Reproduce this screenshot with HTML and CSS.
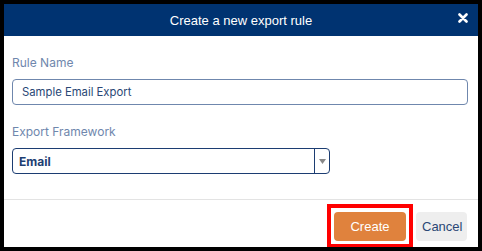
FILE: index.html
```html
<!DOCTYPE html>
<html lang="en">

<head>
    <meta charset="UTF-8">
    <meta name="viewport" content="width=device-width, initial-scale=1.0">
    <title>Create a new export rule</title>
    <link rel="stylesheet" href="styles.css">
</head>

<body>
    <div class="dialog">
        <div class="dialog-header">
            <span class="dialog-title">Create a new export rule</span>
            <button class="close-btn" aria-label="Close">
                <svg width="10" height="10" viewBox="0 0 10 10">
                    <path d="M1.5 1.5 L8.5 8.5 M8.5 1.5 L1.5 8.5" stroke="#fff" stroke-width="2.6" stroke-linecap="round" />
                </svg>
            </button>
        </div>

        <div class="dialog-body">
            <div class="form-group">
                <label for="ruleName">Rule Name</label>
                <input type="text" id="ruleName" value="Sample Email Export">
            </div>

            <div class="form-group">
                <label for="framework">Export Framework</label>
                <div class="select-box" id="framework">
                    <span class="select-value">Email</span>
                    <span class="select-arrow">
                        <svg width="7" height="5" viewBox="0 0 7 5">
                            <path d="M0 0 H7 L3.5 5 Z" fill="#888" />
                        </svg>
                    </span>
                </div>
            </div>
        </div>

        <div class="dialog-footer">
            <span class="highlight">
                <button class="btn btn-create">Create</button>
            </span>
            <button class="btn btn-cancel">Cancel</button>
        </div>
    </div>
</body>

</html>
```

FILE: styles.css
```css
html,
body {
    margin: 0;
    height: 100%;
    background-color: #000;
}

body {
    padding: 4px 4px 0 4px;
    box-sizing: border-box;
    font-family: Inter, "Liberation Sans", Arial, sans-serif;
}

.dialog {
    width: 474px;
    height: 243px;
    background: #fff;
    display: flex;
    flex-direction: column;
    overflow: hidden;
}

.dialog-header {
    height: 32px;
    background-color: #003371;
    display: flex;
    align-items: center;
    justify-content: center;
    position: relative;
}

.dialog-title {
    color: #fff;
    font-family: "Liberation Sans", Arial, sans-serif;
    font-size: 13px;
}

.close-btn {
    position: absolute;
    right: 10px;
    top: 9px;
    background: none;
    border: none;
    padding: 0;
    width: 10px;
    height: 10px;
    display: flex;
}

.dialog-body {
    padding: 19px 10px 0 8px;
    height: 164px;
    box-sizing: border-box;
    border-bottom: 1px solid #e3e3e3;
}

.form-group {
    margin-bottom: 19px;
}

label {
    display: block;
    font-size: 12px;
    line-height: 16px;
    color: #6f87ad;
    margin-bottom: 8px;
}

input[type="text"] {
    width: 100%;
    height: 26px;
    box-sizing: border-box;
    border: 1px solid #6f87ad;
    border-radius: 4px;
    padding: 0 9px;
    font-family: Inter, "Liberation Sans", Arial, sans-serif;
    font-size: 11.3px;
    color: #2a4775;
    outline: none;
}

.select-box {
    width: 318px;
    height: 26px;
    box-sizing: border-box;
    border: 1.5px solid #1c3d72;
    border-radius: 4px;
    display: flex;
    align-items: center;
}

.select-value {
    flex: 1;
    padding-left: 6px;
    font-size: 12px;
    font-weight: 700;
    color: #1d3e72;
}

.select-arrow {
    width: 14px;
    height: 100%;
    border-left: 1.5px solid #1c3d72;
    display: flex;
    align-items: center;
    justify-content: center;
}

.dialog-footer {
    flex: 1;
    display: flex;
    justify-content: flex-end;
    align-items: flex-start;
    gap: 10px;
    padding: 12px 11px 0 0;
}

.btn {
    height: 29px;
    border: none;
    border-radius: 4px;
    font-family: "Liberation Sans", Arial, sans-serif;
    font-size: 13px;
    cursor: pointer;
}

.btn-create {
    width: 72px;
    background-color: #e0823d;
    color: #fff;
}

.btn-cancel {
    width: 51px;
    background-color: #eeeeee;
    color: #2a4775;
}

/* red annotation box drawn over the Create button */
.highlight {
    position: relative;
    display: flex;
}

.highlight::after {
    content: "";
    position: absolute;
    top: -8px;
    left: -7px;
    right: -7px;
    bottom: -7px;
    border: 4px solid #ff0000;
    pointer-events: none;
}
```
